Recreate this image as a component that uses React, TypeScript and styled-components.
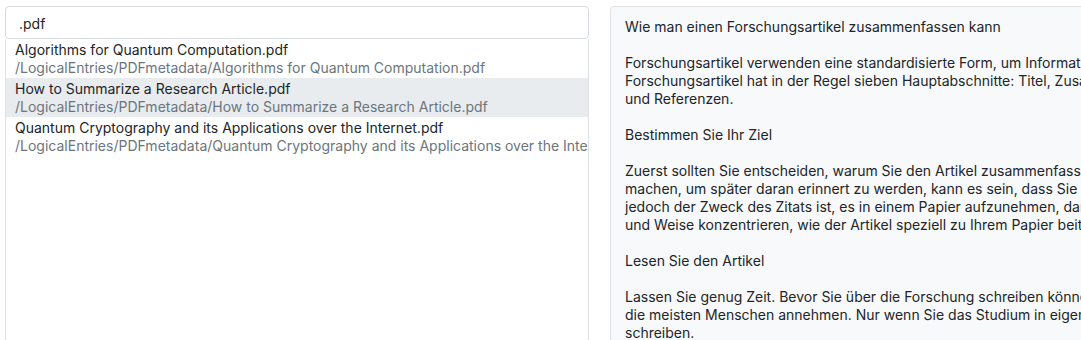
import React from "react";
import styled, { createGlobalStyle } from "styled-components";

const Global = createGlobalStyle`
  html, body { margin: 0; padding: 0; background: #ffffff; overflow: hidden; }
  body { font-family: Inter, "Noto Sans", sans-serif; font-size: 14px; color: #212529; }
`;

const Page = styled.div`
  display: flex;
  gap: 21px;
  padding: 6px 0 0 5px;
  width: 100vw;
  height: 340px;
  box-sizing: border-box;
  overflow: hidden;
`;

const LeftColumn = styled.div`
  flex: 0 0 584px;
  min-width: 0;
  display: flex;
  flex-direction: column;
`;

const SearchInput = styled.input`
  height: 35px;
  box-sizing: border-box;
  border: 1px solid #d7dbe0;
  border-radius: 4px;
  padding: 1px 13px 0;
  font-family: Inter, "Noto Sans", sans-serif;
  font-size: 14px;
  color: #212529;
  outline: none;
  background: #fff;
`;

const ResultList = styled.ul`
  list-style: none;
  margin: 0;
  padding: 0;
  border-left: 1px solid #dfe2e6;
  border-right: 1px solid #dfe2e6;
  height: 320px;
  overflow: hidden;
`;

const ResultItem = styled.li<{ $active?: boolean }>`
  padding: 2px 9px 1px 9px;
  line-height: 18px;
  background: ${(p) => (p.$active ? "#e9ecef" : "transparent")};
  white-space: nowrap;
  overflow: hidden;
`;

const ItemTitle = styled.div`
  color: #212529;
`;

const ItemPath = styled.div`
  color: #6c757d;
`;

const Preview = styled.div`
  flex: 0 0 900px;
  min-width: 0;
  box-sizing: border-box;
  height: 360px;
  background: #f8f9fa;
  border: 1px solid #dfe2e6;
  border-radius: 4px;
  padding: 11px 12px 9px 14px;
  line-height: 18px;
  white-space: pre;
  overflow: hidden;
  color: #212529;
`;

const results = [
  { title: "Algorithms for Quantum Computation.pdf" },
  { title: "How to Summarize a Research Article.pdf", active: true },
  { title: "Quantum Cryptography and its Applications over the Internet.pdf" },
];

const previewText = `Wie man einen Forschungsartikel zusammenfassen kann

Forschungsartikel verwenden eine standardisierte Form, um Informationen klar und effizient zu kommunizieren. Ein
Forschungsartikel hat in der Regel sieben Hauptabschnitte: Titel, Zusammenfassung, Einleitung, Methode, Ergebnisse, Diskussion
und Referenzen.

Bestimmen Sie Ihr Ziel

Zuerst sollten Sie entscheiden, warum Sie den Artikel zusammenfassen. Wenn Sie eine Zusammenfassung für Ihre eigenen Notizen
machen, um später daran erinnert zu werden, kann es sein, dass Sie mehr Details einbeziehen möchten. Wenn
jedoch der Zweck des Zitats ist, es in einem Papier aufzunehmen, dann sollten Sie sich vor allem auf die Art
und Weise konzentrieren, wie der Artikel speziell zu Ihrem Papier beiträgt.

Lesen Sie den Artikel

Lassen Sie genug Zeit. Bevor Sie über die Forschung schreiben können, müssen Sie sie verstehen, was oft länger dauert, als
die meisten Menschen annehmen. Nur wenn Sie das Studium in eigenen Worten erklären können, sind Sie bereit, darüber zu
schreiben.`;

export default function App() {
  return (
    <>
      <Global />
      <Page>
        <LeftColumn>
          <SearchInput defaultValue=".pdf" />
          <ResultList>
            {results.map((r) => (
              <ResultItem key={r.title} $active={r.active}>
                <ItemTitle>{r.title}</ItemTitle>
                <ItemPath>/LogicalEntries/PDFmetadata/{r.title}</ItemPath>
              </ResultItem>
            ))}
          </ResultList>
        </LeftColumn>
        <Preview>{previewText}</Preview>
      </Page>
    </>
  );
}
